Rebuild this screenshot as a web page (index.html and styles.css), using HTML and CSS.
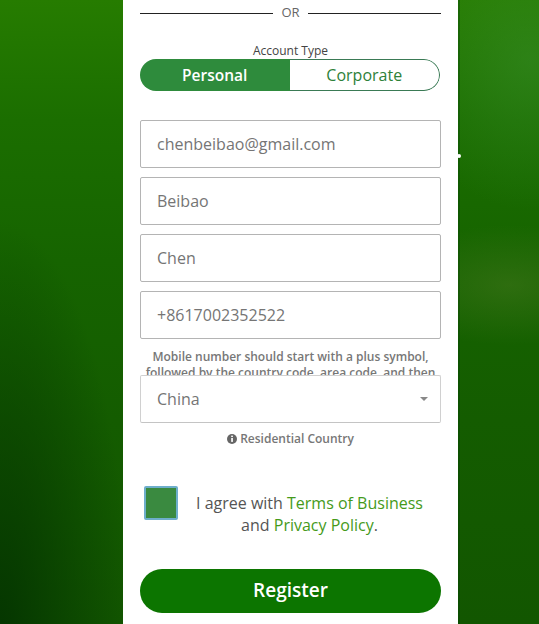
FILE: index.html
```html
<!DOCTYPE html>
<html lang="en">
<head>
<meta charset="utf-8">
<title>Register</title>
<link rel="stylesheet" href="styles.css">
</head>
<body>
<main class="panel">
  <div class="divider"><span class="line"></span><span class="or">OR</span><span class="line"></span></div>
  <div class="type-label">Account Type</div>
  <div class="toggle">
    <div class="opt on">Personal</div>
    <div class="opt">Corporate</div>
  </div>
  <div class="fields">
    <div class="field">chenbeibao@gmail.com</div>
    <div class="field">Beibao</div>
    <div class="field">Chen</div>
    <div class="field">+8617002352522</div>
  </div>
  <p class="help">Mobile number should start with a plus symbol, followed by the country code, area code, and then the number.</p>
  <div class="field select">China<svg class="caret" width="8" height="4" viewBox="0 0 8 4"><path d="M0 0h8L4 4z" fill="#888"/></svg></div>
  <div class="country">
    <svg class="info" width="10" height="10" viewBox="0 0 10 10"><circle cx="5" cy="5" r="5" fill="#666"/><rect x="4.2" y="1.6" width="1.7" height="1.5" fill="#fff"/><rect x="4.2" y="4" width="1.7" height="3.9" fill="#fff"/></svg>
    Residential Country
  </div>
  <div class="agree">
    <span class="check"></span>
    <p class="agree-text">I agree with <a href="#">Terms of Business</a><br>and <a href="#">Privacy Policy</a>.</p>
  </div>
  <button class="register" type="button">Register</button>
</main>
<span class="speck"></span>
</body>
</html>
```
FILE: styles.css
```css
* { box-sizing: border-box; }
html, body { margin: 0; height: 624px; overflow: hidden; }
body {
  position: relative;
  font-family: "Open Sans", "Liberation Sans", sans-serif;
  background:
    radial-gradient(ellipse 130px 150px at 530px 60px, rgba(60,145,50,.45), rgba(60,145,50,0)),
    radial-gradient(ellipse 130px 60px at 510px 285px, rgba(70,120,30,.5), rgba(70,120,30,0)),
    radial-gradient(ellipse 130px 420px at 0 640px, rgba(3,50,0,.9), rgba(3,50,0,0)),
    linear-gradient(180deg, #267c00 0, #1b6e00 120px, #166400 260px, #145c00 420px, #125600 624px);
}
.panel {
  width: 335px;
  height: 624px;
  margin-left: 123px;
  padding: 0 17px;
  background: #fff;
  box-shadow: 2px 0 0 rgba(0,60,0,.35);
}
.divider { display: flex; align-items: center; gap: 8px; height: 25px; padding-top: 1px; }
.line { flex: 1; height: 1px; background: #222; }
.or { font-size: 13px; color: #666; line-height: 18px; margin-top: -2px; }
.type-label { margin-top: 18px; height: 16px; font-size: 12px; font-weight: 500; line-height: 16px; color: #444; text-align: center; }
.toggle {
  display: flex;
  width: 300px;
  height: 32px;
  border-radius: 16px;
  overflow: hidden;
}
.opt { flex: 1; text-align: center; font-size: 16px; line-height: 30px; color: #2e8138; border: 1px solid #3a7a55; border-left: 0; border-radius: 0 16px 16px 0; }
.opt.on { background: #2e8b3c; color: #fff; font-size: 15.5px; font-weight: 600; border: 0; border-radius: 0; line-height: 32px; }
.fields { display: flex; flex-direction: column; gap: 9px; margin-top: 29px; }
.field {
  height: 48px;
  border: 1px solid #b4b4b4;
  border-radius: 2px;
  padding: 0 16px;
  font-size: 16px;
  line-height: 46px;
  color: #757575;
}
.help {
  margin: 0;
  height: 36px;
  overflow: hidden;
  padding: 10px 0 0;
  font-size: 12px;
  font-weight: 600;
  line-height: 16px;
  color: #777;
  text-align: center;
}
.select {
  display: flex;
  justify-content: space-between;
  align-items: center;
  border-color: #d0d0d0;
  border-bottom-color: #c4c4c4;
  padding-right: 12px;
}
.country { margin-top: 8px; height: 16px; font-size: 12px; font-weight: 600; line-height: 16px; color: #777; text-align: center; }
.info { vertical-align: -1px; }
.agree { display: flex; align-items: flex-start; margin-top: 39px; height: 83px; padding-left: 4px; }
.check {
  flex: none;
  width: 34px;
  height: 34px;
  background: #3a8a40;
  border: 2px solid #6eaecb;
  border-radius: 2px;
}
.agree-text {
  margin: 6px 0 0;
  flex: 1;
  font-size: 16px;
  line-height: 22px;
  color: #555;
  text-align: center;
}
.agree-text a { color: #459a1a; text-decoration: none; }
.register {
  display: block;
  width: 301px;
  height: 44px;
  border: 0;
  padding: 0 0 2px;
  border-radius: 22px;
  background: #0c7500;
  color: #fff;
  font-family: inherit;
  font-size: 19px;
  font-weight: 600;
  text-align: center;
}
.speck { position: absolute; left: 457px; top: 154px; width: 4px; height: 4px; border-radius: 50%; background: #fff; }
```
